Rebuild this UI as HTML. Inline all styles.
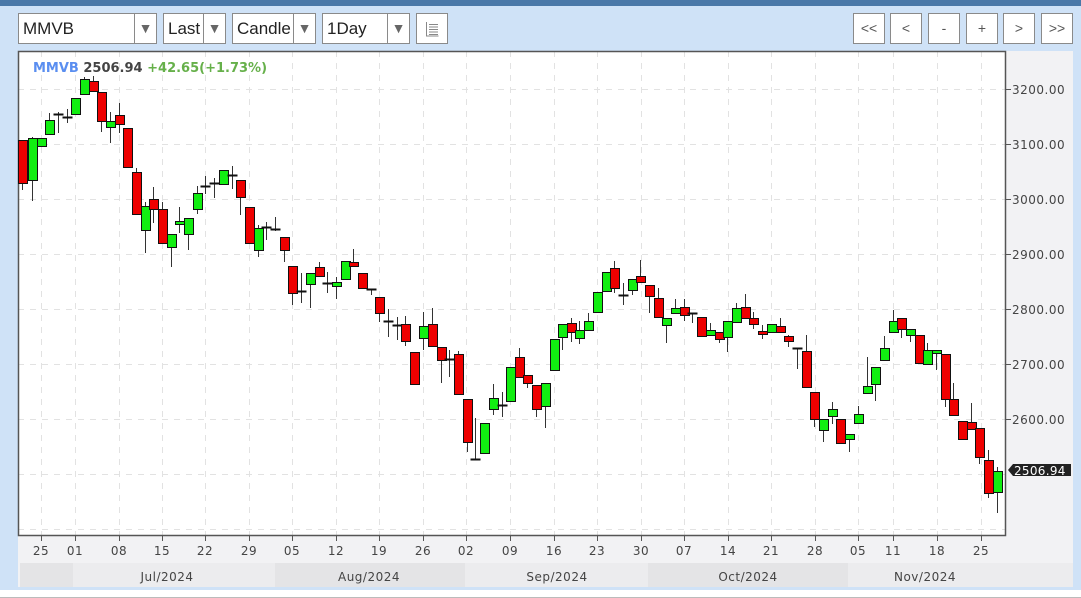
<!DOCTYPE html>
<html><head><meta charset="utf-8"><style>
*{margin:0;padding:0;box-sizing:border-box}
body{width:1081px;height:598px;overflow:hidden;background:#cfe2f7;font-family:"DejaVu Sans","Liberation Sans",sans-serif;position:relative}
.top{position:absolute;left:0;top:0;width:1081px;height:6px;background:#4a78a8}
.sel{position:absolute;top:13px;height:31px;background:#fff;border:1px solid #8a8a8a;font-family:"Liberation Sans",sans-serif;font-size:17px;color:#222;line-height:29px;padding-left:4px}
.sel .ar{position:absolute;right:0;top:0;width:22px;height:29px;border-left:1px solid #8a8a8a;font-size:14px;color:#666;text-align:center;line-height:29px}
.btn{position:absolute;top:13px;width:32px;height:31px;background:#fff;border:1px solid #8a8a8a;font-family:"Liberation Sans",sans-serif;font-size:14px;color:#555;text-align:center;line-height:29px}
.bot{position:absolute;left:0;top:590px;width:1081px;height:8px;background:#fff;border-bottom:1px solid #bbb}
</style></head><body>
<div class="top"></div>
<div class="sel" style="left:18px;width:139px">MMVB<div class="ar">▼</div></div>
<div class="sel" style="left:163px;width:63px">Last<div class="ar">▼</div></div>
<div class="sel" style="left:232px;width:84px;overflow:hidden">Candle<div class="ar" style="background:#fff">▼</div></div>
<div class="sel" style="left:322px;width:88px">1Day<div class="ar">▼</div></div>
<div class="btn" style="left:416px"><svg width="16" height="16" viewBox="0 0 16 16" style="margin-top:7px"><path d="M2.5 1v14h12M5 3.5h9M5 6h9M5 8.5h9M5 11h9M5 13.5h9" stroke="#888" stroke-width="1" fill="none"/></svg></div>
<div class="btn" style="left:853px">&lt;&lt;</div>
<div class="btn" style="left:890px">&lt;</div>
<div class="btn" style="left:928px">-</div>
<div class="btn" style="left:966px">+</div>
<div class="btn" style="left:1003px">&gt;</div>
<div class="btn" style="left:1041px">&gt;&gt;</div>
<div class="bot"></div>
<svg style="position:absolute;left:0;top:0" width="1081" height="598" font-family="DejaVu Sans, sans-serif">
<rect x="18" y="51" width="1055" height="536" fill="#f2f2f4"/>
<rect x="18" y="51" width="988" height="485" fill="#fff"/>
<g fill="#e4e4e6"><rect x="20" y="563" width="53" height="24"/><rect x="275" y="563" width="190" height="24"/><rect x="648" y="563" width="200" height="24"/></g>
<g fill="#ececee"><rect x="73" y="563" width="202" height="24"/><rect x="465" y="563" width="183" height="24"/><rect x="848" y="563" width="225" height="24"/></g>
<g stroke="#e2e2e2" stroke-width="1" stroke-dasharray="6 6">
<path d="M18 89.5H1006M18 144.5H1006M18 199.5H1006M18 254.5H1006M18 309.5H1006M18 364.5H1006M18 419.5H1006M18 474.5H1006M18 529.5H1006"/>
<path d="M41.5 51V536M75.5 51V536M119.5 51V536M162.5 51V536M205.5 51V536M249.5 51V536M292.5 51V536M336.5 51V536M379.5 51V536M423.5 51V536M466.5 51V536M510.5 51V536M554.5 51V536M597.5 51V536M641.5 51V536M684.5 51V536M728.5 51V536M771.5 51V536M815.5 51V536M858.5 51V536M893.5 51V536M937.5 51V536M981.5 51V536"/>
</g>
<rect x="18.5" y="51.5" width="987" height="484" fill="none" stroke="#555" stroke-width="1.5"/>
<g stroke="#555"><path d="M41.5 536v5M75.5 536v5M119.5 536v5M162.5 536v5M205.5 536v5M249.5 536v5M292.5 536v5M336.5 536v5M379.5 536v5M423.5 536v5M466.5 536v5M510.5 536v5M554.5 536v5M597.5 536v5M641.5 536v5M684.5 536v5M728.5 536v5M771.5 536v5M815.5 536v5M858.5 536v5M893.5 536v5M937.5 536v5M981.5 536v5"/>
<path d="M1006 89.5h5M1006 144.5h5M1006 199.5h5M1006 254.5h5M1006 309.5h5M1006 364.5h5M1006 419.5h5"/></g>
<g font-size="12" fill="#444" letter-spacing="0.5">
<text x="1012" y="94">3200.00</text><text x="1012" y="149">3100.00</text><text x="1012" y="204">3000.00</text><text x="1012" y="259">2900.00</text><text x="1012" y="314">2800.00</text><text x="1012" y="369">2700.00</text><text x="1012" y="424">2600.00</text>
</g>
<path d="M1008 470l5-6h58v12h-58z" fill="#222"/>
<text x="1014" y="475" font-size="12" fill="#fff" letter-spacing="0.3">2506.94</text>
<g font-size="12" fill="#444" text-anchor="middle" letter-spacing="0.5">
<text x="41" y="555">25</text><text x="75" y="555">01</text><text x="119" y="555">08</text><text x="162" y="555">15</text><text x="205" y="555">22</text><text x="249" y="555">29</text><text x="292" y="555">05</text><text x="336" y="555">12</text><text x="379" y="555">19</text><text x="423" y="555">26</text><text x="466" y="555">02</text><text x="510" y="555">09</text><text x="554" y="555">16</text><text x="597" y="555">23</text><text x="641" y="555">30</text><text x="684" y="555">07</text><text x="728" y="555">14</text><text x="771" y="555">21</text><text x="815" y="555">28</text><text x="858" y="555">05</text><text x="893" y="555">11</text><text x="937" y="555">18</text><text x="981" y="555">25</text>
<text x="167" y="581">Jul/2024</text><text x="369" y="581">Aug/2024</text><text x="557" y="581">Sep/2024</text><text x="748" y="581">Oct/2024</text><text x="925" y="581">Nov/2024</text>
</g>
<text x="33" y="72" font-size="13" font-weight="bold"><tspan fill="#5a8ef0">MMVB</tspan> <tspan fill="#444">2506.94</tspan> <tspan fill="#66b04a">+42.65(+1.73%)</tspan></text>
<g id="c" stroke="#111" stroke-width="1"></g>
</svg>
<script>
var d=[[22,140,140,183,190,'r'],[32,137,138,180,201,'g'],[41,138,138,146,147,'g'],[49,113,120,134,134,'g'],[58,112,114,114,133,'d'],[67,109,117,117,123,'d'],[75,98,98,114,114,'g'],[84,77,79,94,94,'g'],[93,76,81,91,91,'r'],[101,92,92,121,132,'r'],[110,112,121,127,143,'g'],[119,103,115,124,133,'r'],[127,128,128,167,168,'r'],[136,168,172,214,214,'r'],[145,202,206,230,253,'g'],[153,187,199,209,223,'r'],[162,202,209,243,243,'r'],[171,234,234,247,267,'g'],[179,207,221,224,233,'g'],[188,218,218,234,250,'g'],[197,186,193,209,214,'g'],[205,176,186,186,194,'d'],[214,178,183,183,198,'d'],[223,170,170,184,184,'g'],[232,166,175,175,189,'d'],[240,180,180,197,215,'r'],[249,207,207,243,243,'r'],[258,225,228,250,257,'g'],[266,222,227,227,240,'d'],[275,217,229,229,231,'d'],[284,237,237,250,262,'r'],[292,266,266,293,305,'r'],[301,273,291,291,303,'d'],[310,273,273,284,308,'g'],[319,262,267,276,276,'r'],[327,272,283,283,293,'d'],[336,277,282,286,299,'g'],[345,261,261,279,279,'g'],[353,249,262,266,266,'r'],[362,273,273,288,288,'r'],[371,289,289,289,295,'d'],[379,297,297,313,322,'r'],[388,309,321,321,337,'d'],[397,317,325,325,340,'d'],[405,316,324,341,346,'r'],[414,352,352,384,384,'r'],[423,312,326,338,350,'g'],[432,308,324,346,346,'r'],[441,347,347,360,383,'r'],[449,350,359,359,377,'d'],[458,351,354,394,394,'r'],[467,399,399,442,452,'r'],[475,418,459,459,459,'d'],[484,423,423,453,453,'g'],[493,384,398,409,415,'g'],[502,392,405,405,417,'d'],[510,367,367,401,401,'g'],[519,348,357,377,377,'r'],[527,375,375,383,388,'r'],[536,385,385,409,417,'r'],[545,383,383,406,428,'g'],[554,339,339,370,370,'g'],[562,324,324,337,350,'g'],[571,318,323,332,342,'r'],[579,321,330,338,344,'g'],[588,313,321,330,330,'g'],[597,292,292,312,312,'g'],[606,272,272,291,291,'g'],[614,261,268,288,293,'r'],[623,283,295,295,305,'d'],[632,279,279,290,295,'g'],[640,260,276,282,282,'r'],[649,285,285,296,313,'r'],[658,288,298,317,317,'r'],[666,318,318,325,343,'g'],[675,299,308,313,313,'g'],[684,299,307,315,321,'r'],[692,313,313,313,323,'d'],[701,317,317,336,336,'r'],[710,323,330,335,335,'g'],[719,332,332,339,343,'r'],[727,321,321,337,352,'g'],[736,303,308,322,322,'g'],[745,294,307,318,318,'r'],[753,312,318,324,329,'r'],[762,325,331,334,339,'r'],[771,324,324,332,332,'g'],[780,318,326,332,332,'r'],[788,335,336,341,347,'r'],[797,348,348,348,369,'d'],[806,335,351,387,387,'r'],[814,392,392,419,427,'r'],[823,419,419,430,442,'g'],[832,402,409,416,424,'g'],[840,419,419,443,443,'r'],[849,434,434,439,452,'g'],[858,406,414,423,423,'g'],[867,357,386,393,393,'g'],[875,367,367,384,401,'g'],[884,336,348,360,360,'g'],[893,310,321,332,332,'g'],[901,318,318,329,338,'r'],[910,329,329,335,342,'g'],[919,335,335,363,363,'r'],[927,343,350,364,364,'g'],[936,350,350,353,370,'g'],[945,354,354,399,407,'r'],[953,383,399,415,415,'r'],[962,421,421,439,439,'r'],[971,403,422,429,429,'r'],[979,428,428,457,464,'r'],[988,450,460,493,498,'r'],[997,467,471,492,513,'g']];
var s='';d.forEach(function(c){var x=c[0]+0.5;s+='<path d="M'+x+' '+c[1]+'V'+c[4]+'" stroke="#333"/>';
if(c[5]=='d'){s+='<path d="M'+(x-5)+' '+(c[2]+0.5)+'h10" stroke="#111" stroke-width="2"/>';}
else{s+='<rect x="'+(c[0]-4)+'.5" y="'+c[2]+'.5" width="9" height="'+Math.max(1,c[3]-c[2])+'" fill="'+(c[5]=='g'?'#11ee11':'#ee0000')+'"/>';}});
document.getElementById('c').innerHTML=s;
</script>
</body></html>
